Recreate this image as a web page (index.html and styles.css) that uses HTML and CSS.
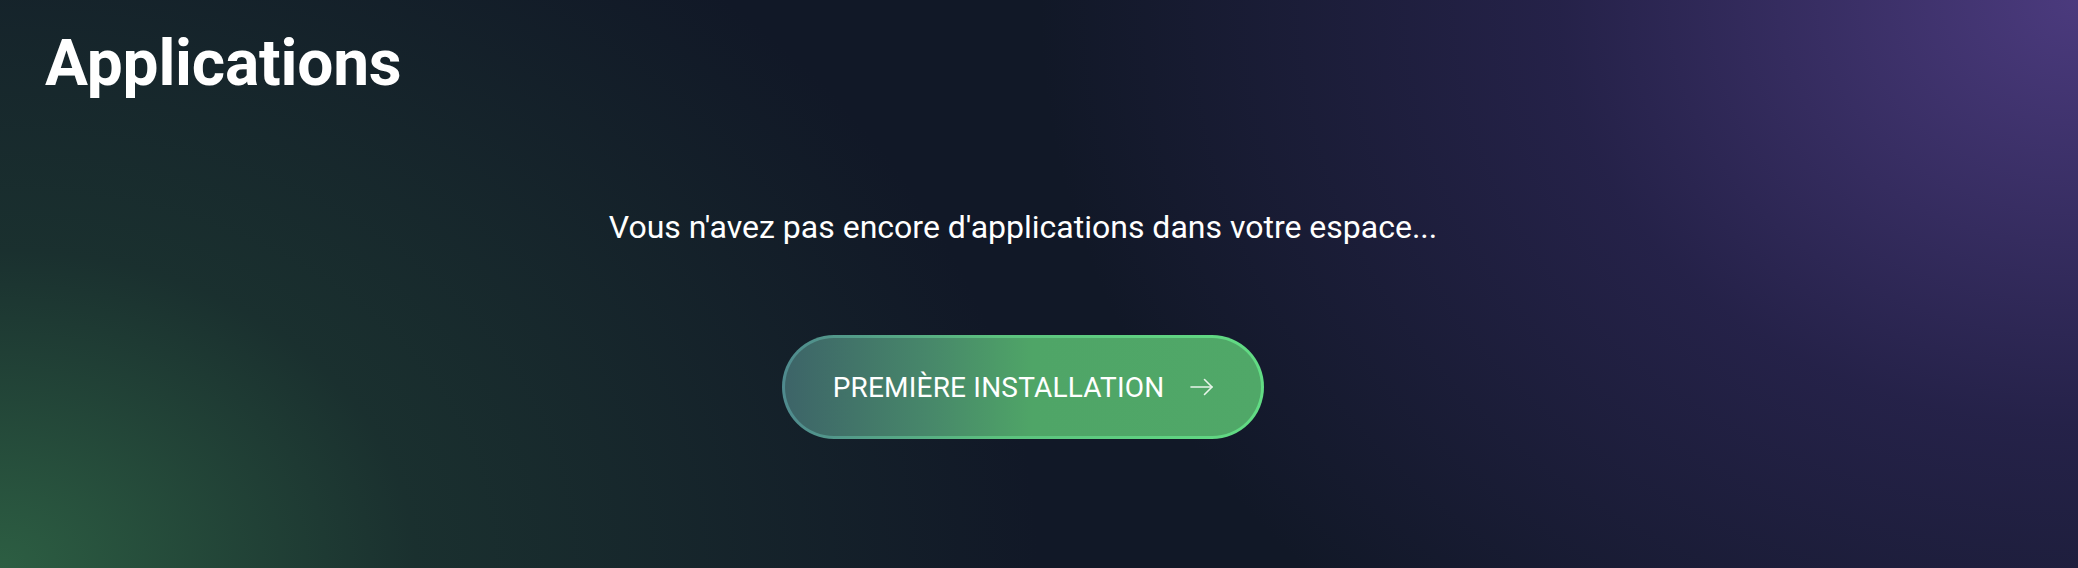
FILE: index.html
```html
<!DOCTYPE html>
<html lang="fr">
<head>
    <meta charset="UTF-8">
    <meta name="viewport" content="width=device-width, initial-scale=1.0">
    <title>Applications</title>
    <link rel="stylesheet" href="styles.css">
</head>
<body>
    <div class="page">
        <h1 class="title">Applications</h1>

        <div class="empty">
            <p class="empty-text">Vous n'avez pas encore d'applications dans votre espace...</p>
            <button class="install-btn">
                <span>PREMIÈRE INSTALLATION</span>
                <svg class="arrow" width="24" height="18" viewBox="0 0 24 18" fill="none" stroke="currentColor" stroke-width="1.6" stroke-linecap="round" stroke-linejoin="round">
                    <path d="M1 9h21"/>
                    <path d="M14.5 1.5L22 9l-7.5 7.5"/>
                </svg>
            </button>
        </div>
    </div>
</body>
</html>
```

FILE: styles.css
```css
* {
    margin: 0;
    padding: 0;
    box-sizing: border-box;
}

html, body {
    height: 100%;
}

body {
    font-family: Roboto, 'Noto Sans', sans-serif;
    color: #fff;
    background:
        radial-gradient(ellipse 50% 140% at 0% 100%, rgba(46, 98, 68, 0.95) 0%, rgba(32, 64, 52, 0.6) 40%, rgba(17, 24, 39, 0) 100%),
        radial-gradient(ellipse 50% 150% at 100% 0%, rgba(78, 60, 130, 0.95) 0%, rgba(50, 40, 95, 0.6) 50%, rgba(17, 24, 39, 0) 100%),
        #111827;
    overflow: hidden;
}

.page {
    padding: 26px 32px 0 45px;
}

.title {
    font-size: 64px;
    font-weight: 700;
    line-height: 75px;
    letter-spacing: -0.2px;
}

.empty {
    display: flex;
    flex-direction: column;
    align-items: center;
    margin-left: -45px;
    padding-top: 107px;
}

.empty-text {
    font-size: 32px;
    line-height: 38px;
}

.install-btn {
    margin-top: 89px;
    display: flex;
    align-items: center;
    gap: 26px;
    height: 104px;
    padding: 0 47px 0 48px;
    border: 3px solid transparent;
    border-radius: 52px;
    background:
        linear-gradient(90deg, #3d6468 0%, #47876a 30%, #4fa567 52%, #50a868 100%) padding-box,
        linear-gradient(90deg, #4f8a8e 0%, #5cc27e 45%, #62dc84 100%) border-box;
    color: #fff;
    font-family: Roboto, 'Noto Sans', sans-serif;
    font-size: 28px;
    font-weight: 400;
    letter-spacing: 0.2px;
    cursor: pointer;
}

.arrow {
    display: block;
    color: #e8f5ea;
}
```
